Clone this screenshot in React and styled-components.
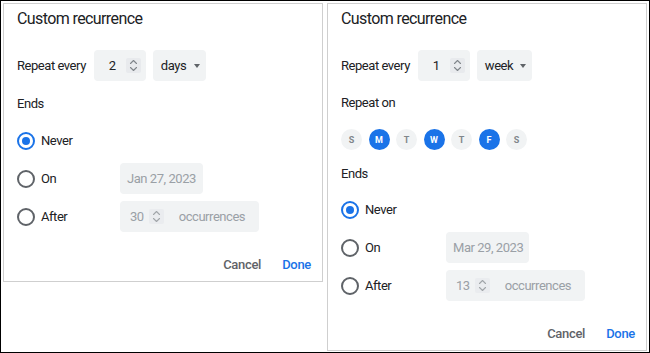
import React from 'react'
import styled, { createGlobalStyle } from 'styled-components'

const GlobalStyle = createGlobalStyle`
  html, body {
    margin: 0;
    padding: 0;
    background: #fff;
  }
  body {
    font-family: Roboto, "Liberation Sans", Arial, sans-serif;
    color: #202124;
  }
`

const Frame = styled.div`
  width: 650px;
  height: 353px;
  box-sizing: border-box;
  border: 1px solid #000;
  background: #fff;
  padding: 2px;
  display: flex;
  align-items: flex-start;
  gap: 4px;
`

const Panel = styled.div`
  width: 320px;
  box-sizing: border-box;
  border: 1px solid #cfcfcf;
  padding: 4px 10px 1px 13px;
  display: flex;
  flex-direction: column;
  font-size: 13px;
  letter-spacing: -0.45px;
`

const Title = styled.h2`
  margin: 0;
  font-size: 16px;
  font-weight: 400;
  line-height: 22px;
  letter-spacing: -0.6px;
  color: #202124;
`

const RepeatRow = styled.div`
  margin-top: 20px;
  height: 31px;
  display: flex;
  align-items: center;
  gap: 7px;
`

const RowLabel = styled.span`
  margin-right: 1px;
`

const Field = styled.div`
  height: 31px;
  box-sizing: border-box;
  background: #f1f3f4;
  border-radius: 4px;
  display: flex;
  align-items: center;
  color: ${p => (p.$muted ? '#9aa0a6' : '#202124')};
  width: ${p => p.$w}px;
  padding-left: ${p => p.$pl || 8}px;
`

const Spinner = styled.span`
  width: 15px;
  height: 15px;
  border-radius: 2px;
  background: #e8eaed;
  display: inline-flex;
  align-items: center;
  justify-content: center;
  margin-left: ${p => p.$ml}px;
  opacity: ${p => (p.$muted ? 0.7 : 1)};
`

const Caret = styled.span`
  margin-left: auto;
  margin-right: 6px;
  width: 0;
  height: 0;
  border-left: 3.5px solid transparent;
  border-right: 3.5px solid transparent;
  border-top: 4px solid #5f6368;
`

const SectionLabel = styled.div`
  margin-top: ${p => p.$mt}px;
  line-height: 20px;
`

const Days = styled.div`
  margin-top: 16px;
  display: flex;
  gap: 6.5px;
`

const Day = styled.span`
  width: 21px;
  height: 21px;
  border-radius: 50%;
  display: flex;
  align-items: center;
  justify-content: center;
  font-size: 9px;
  font-weight: 700;
  letter-spacing: 0;
  background: ${p => (p.$on ? '#1a73e8' : '#f1f3f4')};
  color: ${p => (p.$on ? '#fff' : '#80868b')};
`

const Options = styled.div`
  margin-top: ${p => p.$mt}px;
  display: flex;
  flex-direction: column;
  gap: 7px;
`

const Option = styled.label`
  height: 31px;
  display: grid;
  grid-template-columns: ${p => p.$col}px auto;
  align-items: center;
`

const RadioWrap = styled.span`
  display: flex;
  align-items: center;
  gap: 6px;
`

const Radio = styled.span`
  width: 18px;
  height: 18px;
  box-sizing: border-box;
  border-radius: 50%;
  border: 2px solid ${p => (p.$on ? '#1a73e8' : '#5f6368')};
  display: flex;
  align-items: center;
  justify-content: center;
  &::after {
    content: '';
    width: 8px;
    height: 8px;
    border-radius: 50%;
    background: ${p => (p.$on ? '#1a73e8' : 'transparent')};
  }
`

const Unit = styled.span`
  margin-left: 15px;
`

const Actions = styled.div`
  margin-top: 16px;
  height: 32px;
  display: flex;
  justify-content: flex-end;
  align-items: center;
  gap: 21px;
  padding-right: 1px;
`

const TextButton = styled.button`
  border: none;
  background: none;
  padding: 0;
  font-family: inherit;
  font-size: 13px;
  letter-spacing: -0.3px;
  font-weight: 500;
  color: ${p => (p.$primary ? '#1a73e8' : '#5f6368')};
`

const Chevrons = () => (
  <svg width="9" height="13" viewBox="0 0 9 13" fill="none" stroke="#80868b" strokeWidth="1.1" strokeLinecap="round" strokeLinejoin="round">
    <path d="M1.5 4.5 L4.5 1.5 L7.5 4.5" />
    <path d="M1.5 8.5 L4.5 11.5 L7.5 8.5" />
  </svg>
)

const Dialog = ({ count, unit, weekly, date, occurrences, labelCol }) => {
  const days = [
    { d: 'S', on: false },
    { d: 'M', on: true },
    { d: 'T', on: false },
    { d: 'W', on: true },
    { d: 'T', on: false },
    { d: 'F', on: true },
    { d: 'S', on: false },
  ]
  return (
    <Panel>
      <Title>Custom recurrence</Title>
      <RepeatRow>
        <RowLabel>Repeat every</RowLabel>
        <Field $w={52} $pl={15}>
          {count}
          <Spinner $ml={10}><Chevrons /></Spinner>
        </Field>
        <Field $w={weekly ? 55 : 53}>
          {unit}
          <Caret />
        </Field>
      </RepeatRow>
      {weekly && (
        <>
          <SectionLabel $mt={12}>Repeat on</SectionLabel>
          <Days>
            {days.map((x, i) => (
              <Day key={i} $on={x.on}>{x.d}</Day>
            ))}
          </Days>
        </>
      )}
      <SectionLabel $mt={weekly ? 14 : 13}>Ends</SectionLabel>
      <Options $mt={weekly ? 10 : 11}>
        <Option $col={labelCol}>
          <RadioWrap><Radio $on />Never</RadioWrap>
        </Option>
        <Option $col={labelCol}>
          <RadioWrap><Radio />On</RadioWrap>
          <Field $w={83} $pl={7} $muted>{date}</Field>
        </Option>
        <Option $col={labelCol}>
          <RadioWrap><Radio />After</RadioWrap>
          <Field $w={139} $pl={10} $muted>
            {occurrences}
            <Spinner $ml={5} $muted><Chevrons /></Spinner>
            <Unit>occurrences</Unit>
          </Field>
        </Option>
      </Options>
      <Actions>
        <TextButton>Cancel</TextButton>
        <TextButton $primary>Done</TextButton>
      </Actions>
    </Panel>
  )
}

const App = () => (
  <>
    <GlobalStyle />
    <Frame>
      <Dialog count="2" unit="days" date="Jan 27, 2023" occurrences="30" labelCol={103} />
      <Dialog count="1" unit="week" weekly date="Mar 29, 2023" occurrences="13" labelCol={105} />
    </Frame>
  </>
)

export default App
